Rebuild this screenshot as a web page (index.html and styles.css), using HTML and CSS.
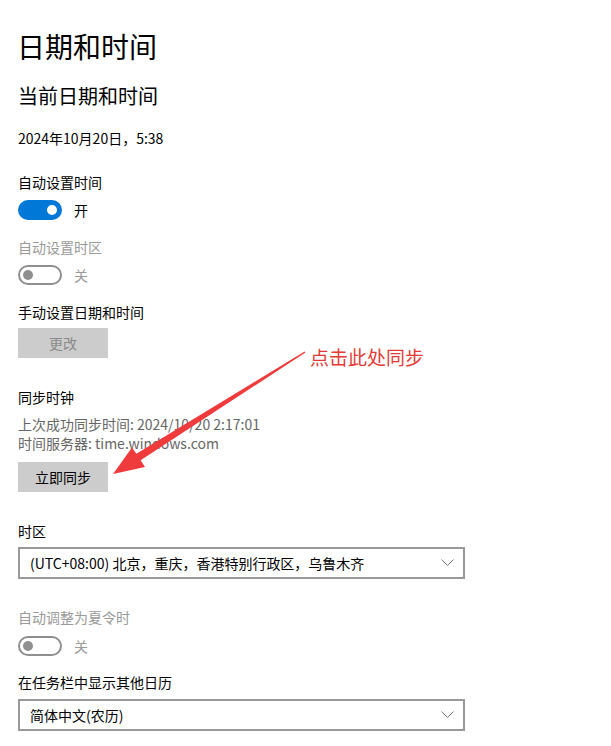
FILE: index.html
```html
<!DOCTYPE html>
<html lang="zh-CN">
<head>
<meta charset="utf-8">
<link rel="stylesheet" href="styles.css">
</head>
<body>
<main class="page">
  <h1 class="title">日期和时间</h1>
  <h2 class="subtitle">当前日期和时间</h2>
  <p class="text date">2024年10月20日，5:38</p>

  <p class="text label gap-lg">自动设置时间</p>
  <div class="toggle-row">
    <span class="toggle on"><span class="knob"></span></span>
    <span class="state">开</span>
  </div>

  <p class="text label muted gap-md">自动设置时区</p>
  <div class="toggle-row">
    <span class="toggle off"><span class="knob"></span></span>
    <span class="state muted">关</span>
  </div>

  <p class="text label gap-md">手动设置日期和时间</p>
  <button class="btn disabled">更改</button>

  <p class="text label gap-xl">同步时钟</p>
  <div class="info">
    <p>上次成功同步时间: 2024/10/20 2:17:01</p>
    <p>时间服务器: time.windows.com</p>
  </div>
  <button class="btn btn-sync">立即同步</button>

  <p class="text label gap-xl">时区</p>
  <div class="select select-tz">
    <span>(UTC+08:00) 北京，重庆，香港特别行政区，乌鲁木齐</span>
    <svg class="chev" width="13" height="8" viewBox="0 0 13 8"><path d="M0.5 0.5 L6.5 6.5 L12.5 0.5" fill="none" stroke="#777" stroke-width="1"/></svg>
  </div>

  <p class="text label muted gap-dst">自动调整为夏令时</p>
  <div class="toggle-row toggle-dst">
    <span class="toggle off"><span class="knob"></span></span>
    <span class="state muted">关</span>
  </div>

  <p class="text label gap-sm">在任务栏中显示其他日历</p>
  <div class="select select-cal">
    <span>简体中文(农历)</span>
    <svg class="chev" width="13" height="8" viewBox="0 0 13 8"><path d="M0.5 0.5 L6.5 6.5 L12.5 0.5" fill="none" stroke="#777" stroke-width="1"/></svg>
  </div>

  <div class="annotation">
    <svg class="arrow" width="611" height="746" viewBox="0 0 611 746">
      <polygon points="305.4,352.6 140.6,460.2 145,467 113,474 132,447.5 136.4,453.8 304.6,351.4" fill="#ef3b3b"/>
    </svg>
    <span class="note">点击此处同步</span>
  </div>
</main>
</body>
</html>
```
FILE: styles.css
```css
* { box-sizing: border-box; }
html, body { margin: 0; padding: 0; background: #fff; }
body {
  font-family: "Noto Sans CJK SC", "Noto Sans", sans-serif;
  color: #000;
  width: 611px;
  height: 746px;
  overflow: hidden;
}
.page {
  position: relative;
  padding: 26px 0 0 18px;
  display: flex;
  flex-direction: column;
  align-items: flex-start;
}
.title {
  margin: 0;
  font-size: 28px;
  font-weight: 400;
  line-height: 40px;
  margin-left: -1px;
}
.subtitle {
  margin: 16px 0 0;
  font-size: 20px;
  font-weight: 400;
  line-height: 28px;
}
.text {
  margin: 0;
  font-size: 14px;
  line-height: 20px;
}
.date { margin-top: 18px; }
.gap-lg { margin-top: 24px; }
.gap-md { margin-top: 17px; }
.gap-sm { margin-top: 16px; }
.gap-xl { margin-top: 29px; }
.gap-dst { margin-top: 28px; }
.muted { color: #9a9a9a; }

.toggle-row {
  display: flex;
  align-items: center;
  gap: 12px;
  margin-top: 8px;
  height: 20px;
}
.toggle-dst { margin-top: 9px; }
.toggle {
  width: 44px;
  height: 20px;
  border-radius: 10px;
  display: flex;
  align-items: center;
  padding: 0 5px;
}
.toggle .knob {
  width: 10px;
  height: 10px;
  border-radius: 50%;
}
.toggle.on {
  background: #0078d7;
  justify-content: flex-end;
}
.toggle.on .knob { background: #fff; }
.toggle.off {
  border: 2px solid #8f8f8f;
  padding: 0 3px;
}
.toggle.off .knob { background: #8f8f8f; }
.state { font-size: 14px; line-height: 20px; }

.btn {
  margin-top: 6px;
  width: 90px;
  height: 30px;
  border: none;
  background: #cccccc;
  font-family: inherit;
  font-size: 14px;
  color: #000;
  padding: 0;
}
.btn.disabled { color: #8a8a8a; }
.btn-sync { margin-top: 9px; }

.info {
  margin-top: 8px;
  font-size: 14px;
  line-height: 19px;
  color: #666;
}
.info p { margin: 0; }

.select {
  width: 447px;
  height: 32px;
  border: 2px solid #999;
  display: flex;
  align-items: center;
  justify-content: space-between;
  padding: 0 9px 0 10px;
  font-size: 14px;
}
.select-tz { margin-top: 6px; }
.select-cal { margin-top: 7px; }
.chev { display: block; }

.annotation {
  position: absolute;
  left: 0;
  top: 0;
  width: 611px;
  height: 746px;
  pointer-events: none;
}
.arrow { position: absolute; left: 0; top: 0; }
.note {
  position: absolute;
  left: 310px;
  top: 344px;
  font-size: 19px;
  line-height: 26px;
  color: #e53935;
}
```
